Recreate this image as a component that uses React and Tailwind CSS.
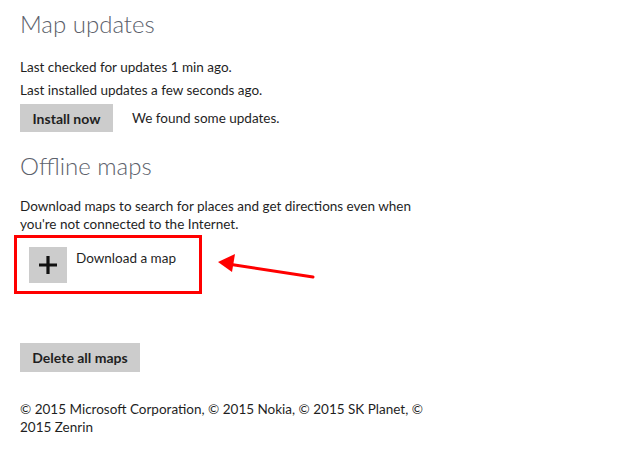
export default function App() {
  return (
    <div
      className="relative w-[620px] h-[451px] bg-white text-[#1f1f1f] px-5"
      style={{ fontFamily: 'Lato, "Open Sans", sans-serif' }}
    >
      {/* Map updates */}
      <h1 className="pt-[7px] text-[24px] leading-[34px] font-light text-[#5c616b]">Map updates</h1>
      <p className="mt-[17px] text-[13.5px] leading-[18px]">Last checked for updates 1 min ago.</p>
      <p className="mt-[5px] text-[13.5px] leading-[18px]">Last installed updates a few seconds ago.</p>
      <div className="mt-[5px] flex items-center gap-[19px]">
        <button className="w-[93px] h-[28px] bg-[#cccccc] text-[14px] font-bold">Install now</button>
        <span className="text-[13.5px]">We found some updates.</span>
      </div>

      {/* Offline maps */}
      <h2 className="mt-[17px] text-[24px] leading-[34px] font-light text-[#5c616b]">Offline maps</h2>
      <p className="mt-[14px] w-[410px] text-[13.5px] leading-[18px]">
        Download maps to search for places and get directions even when you're not connected to the Internet.
      </p>

      <div className="relative mt-[2px] -ml-[6px] w-[188px] h-[59px] border-[3px] border-[#ff0000] flex items-start pt-[9px] pl-[12px] gap-[9px]">
        <div className="w-[38px] h-[36px] bg-[#cccccc] flex items-center justify-center">
          <svg width="18" height="18" viewBox="0 0 18 18">
            <path d="M9 0v18M0 9h18" stroke="#111" strokeWidth="3.2" />
          </svg>
        </div>
        <span className="text-[13.5px] leading-[18px] mt-[2px]">Download a map</span>
      </div>

      {/* annotation arrow */}
      <svg className="absolute left-[212px] top-[252px]" width="110" height="30" viewBox="0 0 110 30">
        <path d="M101 25 L16 12" stroke="#ff0000" strokeWidth="3" strokeLinecap="round" />
        <path d="M6 10 L23 2 L20 20 Z" fill="#ff0000" />
      </svg>

      <button className="mt-[49px] w-[120px] h-[29px] bg-[#cccccc] text-[14px] font-bold">Delete all maps</button>

      <p className="mt-[28px] w-[412px] text-[13.5px] leading-[18px]">
        © 2015 Microsoft Corporation, © 2015 Nokia, © 2015 SK Planet, © 2015 Zenrin
      </p>
    </div>
  );
}
